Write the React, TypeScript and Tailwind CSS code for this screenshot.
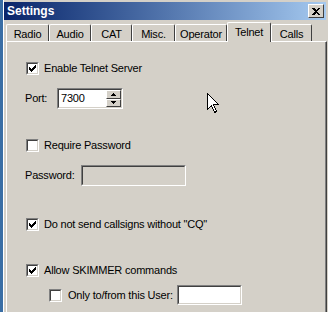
import React from 'react';

const FONT = { fontFamily: '"Liberation Sans", Arial, sans-serif' };

function Tick() {
  // classic 7x7 pixel checkmark
  const rows: [number, number, number][] = [
    [6, 0, 1], [5, 1, 2], [0, 2, 1], [4, 2, 3], [0, 3, 2], [3, 3, 3], [0, 4, 5], [1, 5, 3], [2, 6, 1],
  ];
  return (
    <svg width="7" height="7" viewBox="0 0 7 7" shapeRendering="crispEdges">
      {rows.map(([x, y, w], i) => (
        <rect key={i} x={x} y={y} width={w} height={1} fill="#000" />
      ))}
    </svg>
  );
}

function CheckBox({ checked }: { checked?: boolean }) {
  return (
    <span className="flex w-[13px] h-[13px] shrink-0 border border-t-[#808080] border-l-[#808080] border-r-white border-b-white">
      <span className="flex flex-1 items-center justify-center bg-white border border-t-[#404040] border-l-[#404040] border-r-[#d4d0c8] border-b-[#d4d0c8]">
        {checked && <Tick />}
      </span>
    </span>
  );
}

function Sunken({ className, children, disabled }: any) {
  return (
    <div className={`flex border border-t-[#808080] border-l-[#808080] border-r-white border-b-white ${className}`}>
      <div className={`flex flex-1 border border-t-[#404040] border-l-[#404040] border-r-[#d4d0c8] border-b-[#d4d0c8] ${disabled ? 'bg-[#d4d0c8]' : 'bg-white'}`}>
        {children}
      </div>
    </div>
  );
}

function SpinHalf({ up }: { up?: boolean }) {
  return (
    <div className="flex flex-1 items-center justify-center bg-[#d4d0c8] border border-t-white border-l-white border-r-[#404040] border-b-[#404040]">
      <svg width="5" height="3" viewBox="0 0 5 3" shapeRendering="crispEdges">
        {up ? <path d="M2 0h1v1h1v1h1v1H0V2h1V1h1z" fill="#000" /> : <path d="M0 0h5v1H4v1H3v1H2V2H1V1H0z" fill="#000" />}
      </svg>
    </div>
  );
}

function Tab({ label, active, w }: { label: string; active?: boolean; w: string }) {
  return (
    <div
      className={`flex ${w} shrink-0 items-center justify-center border-t border-l border-t-white border-l-white border-r border-r-[#404040] rounded-tl-[2px] rounded-tr-[2px] text-[11px] text-black ${
        active ? 'h-[20px] relative z-10 bg-[#d4d0c8] pb-[1px]' : 'h-[17px] mt-[2px] pt-[2px]'
      }`}
    >
      {label}
    </div>
  );
}

function Cursor() {
  return (
    <svg className="absolute left-[207px] top-[93px]" width="12" height="21" viewBox="0 0 12 21" shapeRendering="crispEdges">
      <path d="M0.5 0.5V16.5L4.5 12.5L7.5 19.5L9.5 18.5L6.5 11.5H11.5Z" fill="#fff" stroke="#000" strokeWidth="1" />
    </svg>
  );
}

export default function App() {
  return (
    <div className="relative flex w-[328px] h-[312px] overflow-hidden bg-[#d4d0c8] tracking-[-0.2px]" style={FONT}>
      <div className="w-[3px] shrink-0 bg-[#3a6ea5]" />
      <div className="flex flex-1 flex-col border-l border-l-white">
        {/* title bar */}
        <div className="mt-[2px] mr-[2px] flex h-[18px] items-center justify-between bg-gradient-to-r from-[#0a246a] to-[#a6caf0] pl-[3px] pr-[2px]">
          <span className="text-[12px] font-bold text-white leading-none tracking-normal">Settings</span>
          <div className="flex h-[14px] w-[16px] items-center justify-center bg-[#d4d0c8] border border-t-white border-l-white border-r-[#404040] border-b-[#404040]">
            <svg width="8" height="7" viewBox="0 0 8 7" shapeRendering="crispEdges">
              <path d="M0 0h2l2 2 2-2h2L5 3.5 8 7H6L4 5 2 7H0l3-3.5z" fill="#000" />
            </svg>
          </div>
        </div>

        {/* tabs */}
        <div className="ml-[2px] mt-[2px] flex h-[19px] items-start">
          <Tab label="Radio" w="w-[43px]" />
          <Tab label="Audio" w="w-[42px]" />
          <Tab label="CAT" w="w-[41px]" />
          <Tab label="Misc." w="w-[43px]" />
          <Tab label="Operator" w="w-[52px]" />
          <Tab label="Telnet" active w="w-[44px]" />
          <Tab label="Calls" w="w-[41px]" />
        </div>

        {/* panel */}
        <div className="ml-[2px] mr-[1px] flex flex-1 border-t border-l border-t-white border-l-white border-r border-r-[#404040]">
          <div className="flex flex-1 flex-col border-r border-r-[#808080] pl-[19px] pt-[20px] text-[11px] text-black">
            <div className="flex h-[13px] items-center gap-[5px]">
              <CheckBox checked />
              <span>Enable Telnet Server</span>
            </div>

            <div className="mt-[13px] flex h-[21px] items-center">
              <span className="w-[32px] -ml-[1px]">Port:</span>
              <Sunken className="h-[21px] w-[66px]">
                <span className="flex-1 pl-[2px] leading-[17px]">7300</span>
                <div className="flex w-[15px] flex-col">
                  <SpinHalf up />
                  <SpinHalf />
                </div>
              </Sunken>
            </div>

            <div className="mt-[30px] flex h-[13px] items-center gap-[5px]">
              <CheckBox />
              <span>Require Password</span>
            </div>

            <div className="mt-[13px] flex h-[21px] items-center">
              <span className="w-[56px] -ml-[1px]">Password:</span>
              <Sunken className="h-[21px] w-[105px]" disabled />
            </div>

            <div className="mt-[32px] flex h-[13px] items-center gap-[5px]">
              <CheckBox checked />
              <span>Do not send callsigns without "CQ"</span>
            </div>

            <div className="mt-[33px] flex h-[13px] items-center gap-[5px]">
              <CheckBox checked />
              <span>Allow SKIMMER commands</span>
            </div>

            <div className="mt-[8px] ml-[23px] flex h-[20px] items-center">
              <CheckBox />
              <span className="ml-[6px] w-[109px] whitespace-nowrap">Only to/from this User:</span>
              <Sunken className="h-[20px] w-[65px]" />
            </div>
          </div>
        </div>
      </div>
      <Cursor />
    </div>
  );
}
